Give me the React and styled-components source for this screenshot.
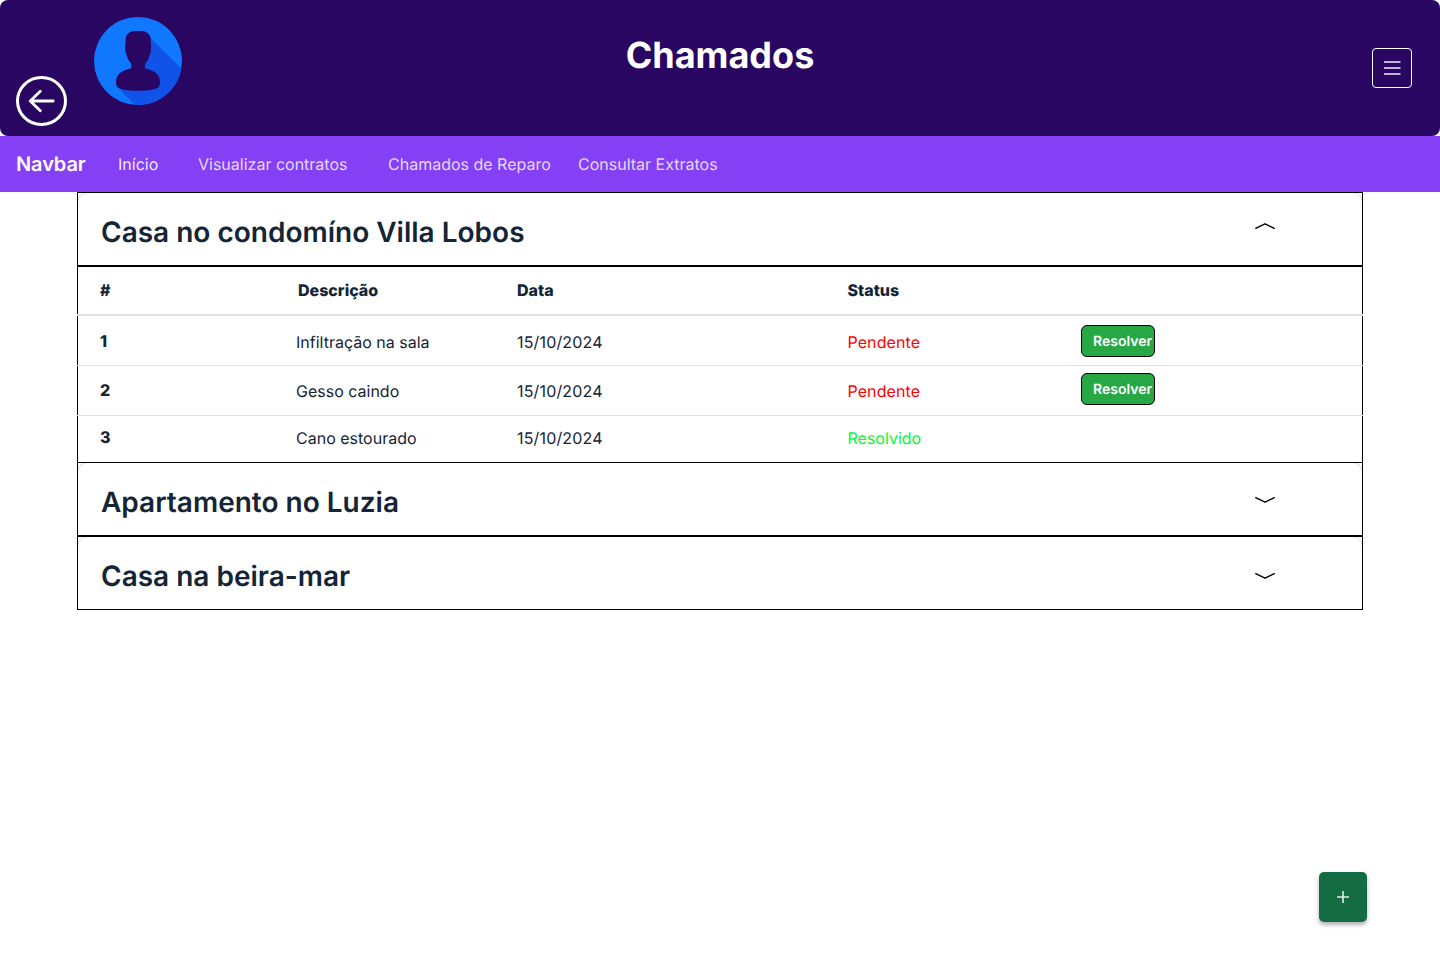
import React from "react";
import styled, { createGlobalStyle } from "styled-components";

const GlobalStyle = createGlobalStyle`
  * { box-sizing: border-box; }
  body {
    margin: 0;
    background: #fff;
    color: #152536;
    font-family: Inter, "Liberation Sans", sans-serif;
    text-rendering: geometricPrecision;
  }
  button { font-family: inherit; cursor: pointer; text-rendering: inherit; }
`;

const Page = styled.div`
  position: relative;
  display: flex;
  flex-direction: column;
  height: 960px;
  overflow: hidden;
`;

const Header = styled.header`
  display: grid;
  grid-template-columns: 1fr auto 1fr;
  height: 136px;
  background: #290661;
  border-radius: 8px;
`;

const HeaderStart = styled.div`
  display: flex;
  gap: 27px;
  padding-left: 16px;
`;

const BackButton = styled.button`
  display: flex;
  width: 51px;
  height: 50px;
  margin-top: 76px;
  padding: 0;
  border: 0;
  background: none;
`;

const Avatar = styled.svg`
  width: 88px;
  height: 88px;
  margin-top: 17px;
`;

const Title = styled.h1`
  margin: 31px 0 0;
  color: #fff;
  font-size: 36px;
  font-weight: 700;
  line-height: 48px;
`;

const MenuButton = styled.button`
  display: flex;
  align-items: center;
  justify-content: center;
  justify-self: end;
  width: 40px;
  height: 40px;
  margin: 48px 28px 0 0;
  padding: 0;
  background: none;
  border: 1px solid #fff;
  border-radius: 4px;
`;

const Nav = styled.nav`
  display: flex;
  align-items: center;
  height: 56px;
  padding-left: 16px;
  background: #8540f5;
`;

const Brand = styled.span`
  width: 102px;
  color: #fff;
  font-size: 20px;
  font-weight: 600;
  letter-spacing: -0.1px;
`;

const NavLink = styled.a`
  width: ${(p) => p.$width}px;
  color: ${(p) => (p.$active ? "rgba(255,255,255,.9)" : "rgba(255,255,255,.8)")};
  font-size: 16px;
  white-space: nowrap;
`;

const Accordion = styled.main`
  width: 1286px;
  margin: 0 auto;
`;

const Panel = styled.section`
  display: flex;
  justify-content: space-between;
  height: 74px;
  padding: 19px 86px 0 23px;
  border: 1px solid #000;
  background: radial-gradient(circle at 10px 10px, transparent 9.5px, #dee2e6 10px, #dee2e6 10.5px, transparent 11px) 0 0 / 10px 10px no-repeat,
    radial-gradient(circle at 0 10px, transparent 9.5px, #dee2e6 10px, #dee2e6 10.5px, transparent 11px) 100% 0 / 10px 10px no-repeat;
`;

const PanelTitle = styled.h2`
  margin: 0;
  font-size: 28px;
  font-weight: 600;
  line-height: 40px;
`;

const Chevron = styled.svg`
  width: 22px;
  height: 8px;
  margin-top: ${(p) => p.$top}px;
`;

const Table = styled.div`
  height: 196px;
  border: 1px solid #000;
  border-bottom: 0;
`;

const TableRow = styled.div`
  display: grid;
  grid-template-columns: 196px 221px 330.5px 233.5px 74px;
  align-items: start;
  height: ${(p) => p.$height}px;
  margin: 0 -1px;
  padding: ${(p) => p.$pad}px 0 0 23px;
  border: 0 solid #dee2e6;
  border-bottom-width: ${(p) => p.$line}px;
`;

const HeadCell = styled.span`
  padding-left: ${(p) => p.$indent || 0}px;
  font-size: 16px;
  font-weight: 800;
  line-height: 24px;
`;

const Index = styled.span`
  font-size: 16px;
  font-weight: 800;
  line-height: 24px;
`;

const Cell = styled.span`
  padding-top: 1px;
  color: ${(p) => p.$color || "inherit"};
  font-size: 16px;
  letter-spacing: ${(p) => p.$tracking || 0}px;
  line-height: 24px;
`;

const ResolveButton = styled.button`
  width: 74px;
  height: 32px;
  margin-top: ${(p) => p.$offset}px;
  padding: 1px 0 0 11px;
  color: #fff;
  background: #28a745;
  border: 1px solid #000;
  border-radius: 6px;
  font-size: 14px;
  font-weight: 600;
  line-height: 29px;
  text-align: left;
  white-space: nowrap;
`;

const AddButton = styled.button`
  position: absolute;
  left: 1319px;
  top: 872px;
  display: flex;
  align-items: center;
  justify-content: center;
  width: 48px;
  height: 50px;
  padding: 0;
  border: 0;
  border-radius: 5px;
  background: #146c43;
  box-shadow: 0 3px 4px rgba(0, 0, 0, 0.3);
`;

const tickets = [
  { id: 1, text: "Infiltração na sala", date: "15/10/2024", open: true, height: 50, line: 1, pad: 13, offset: -4 },
  { id: 2, text: "Gesso caindo", date: "15/10/2024", open: true, height: 50, line: 1, pad: 12, offset: -5 },
  { id: 3, text: "Cano estourado", date: "15/10/2024", open: false, height: 46, line: 0, pad: 9 },
];

function Property({ name, open, top }) {
  return (
    <Panel>
      <PanelTitle>{name}</PanelTitle>
      <Chevron $top={top} viewBox="0 0 22 8" fill="none" stroke="#000" strokeWidth="1.4" strokeLinecap="round" strokeLinejoin="round">
        <path d={open ? "M1.7 6.3 11 1.8l9.3 4.5" : "M1.7 1.7 11 6.2l9.3-4.5"} />
      </Chevron>
    </Panel>
  );
}

export default function App() {
  return (
    <Page>
      <GlobalStyle />
      <Header>
        <HeaderStart>
          <BackButton aria-label="Voltar">
            <svg width="51" height="50" viewBox="0 0 51 50" fill="none" stroke="#fff" strokeWidth="3">
              <ellipse cx="25.5" cy="25" rx="24" ry="23.5" />
              <path d="M37.2 25H14.5M24.3 15.2 14.2 25l10.1 9.8" strokeWidth="2.8" strokeLinecap="round" strokeLinejoin="round" />
            </svg>
          </BackButton>
          <Avatar viewBox="0 0 88 88">
            <defs>
              <clipPath id="disc"><circle cx="44" cy="44" r="44" /></clipPath>
            </defs>
            <g clipPath="url(#disc)">
              <path fill="#0f78ff" d="M0 0h88v88H0z" />
              <path fill="#1053e8" d="M55.500 20 90 54v36H43L26 73 44 60z" />
              <path fill="#290661" d="M39 14H49.500C53 14.800 55.800 17.500 56.500 20.500C56.900 22.300 56.900 24 56.600 25.500C57.300 27 57.300 31 56.800 34.500C56.500 36.500 56.200 37.500 55.500 38C55 41 53.500 44.500 51 46.700V51C52.500 52.300 55.500 52.400 58.500 53.800C63 56 66 60 66 65C66 68.500 65 70.500 62.500 71.500C58 73.300 51 73.800 44 73.800S30 73.300 25.500 71.500C23 70.500 22 68.500 22 65C22 60 25 56 29.500 53.800C32.500 52.400 35.800 52.300 37.300 51V46.700C34.800 44.500 33.300 41 32.800 38C32.100 37.500 31.800 36.500 31.500 34.500C31 31 31 27 31.700 25.500C31.400 24 31.400 22.300 31.800 20.500C32.500 17.500 35.500 14.800 39 14z" />
            </g>
          </Avatar>
        </HeaderStart>
        <Title>Chamados</Title>
        <MenuButton aria-label="Menu">
          <svg width="18" height="16" viewBox="0 0 18 16" stroke="#c0b2d8" strokeWidth="2">
            <path d="M1 2h16.500M1 8h16.500M1 14h16.500" />
          </svg>
        </MenuButton>
      </Header>
      <Nav>
        <Brand>Navbar</Brand>
        <NavLink $active $width={80}>Início</NavLink>
        <NavLink $width={190}>Visualizar contratos</NavLink>
        <NavLink $width={190}>Chamados de Reparo</NavLink>
        <NavLink $width={160}>Consultar Extratos</NavLink>
      </Nav>
      <Accordion>
        <Property name="Casa no condomíno Villa Lobos" open top={10} />
        <Table>
          <TableRow $height={49} $line={2} $pad={11}>
            <HeadCell>#</HeadCell>
            <HeadCell $indent={2}>Descrição</HeadCell>
            <HeadCell>Data</HeadCell>
            <HeadCell>Status</HeadCell>
          </TableRow>
          {tickets.map((t) => (
            <TableRow key={t.id} $height={t.height} $line={t.line} $pad={t.pad}>
              <Index>{t.id}</Index>
              <Cell>{t.text}</Cell>
              <Cell $tracking={0.16}>{t.date}</Cell>
              <Cell $tracking={t.open ? 0.08 : 0} $color={t.open ? "#ff0000" : "#05fa35"}>
                {t.open ? "Pendente" : "Resolvido"}
              </Cell>
              {t.open && <ResolveButton $offset={t.offset}>Resolver</ResolveButton>}
            </TableRow>
          ))}
        </Table>
        <Property name="Apartamento no Luzia" top={14} />
        <Property name="Casa na beira-mar" top={16} />
      </Accordion>
      <AddButton aria-label="Adicionar">
        <svg width="12" height="12" viewBox="0 0 12 12" stroke="#e2ede7" strokeWidth="1.600">
          <path d="M6 0v12M0 6h12" />
        </svg>
      </AddButton>
    </Page>
  );
}
